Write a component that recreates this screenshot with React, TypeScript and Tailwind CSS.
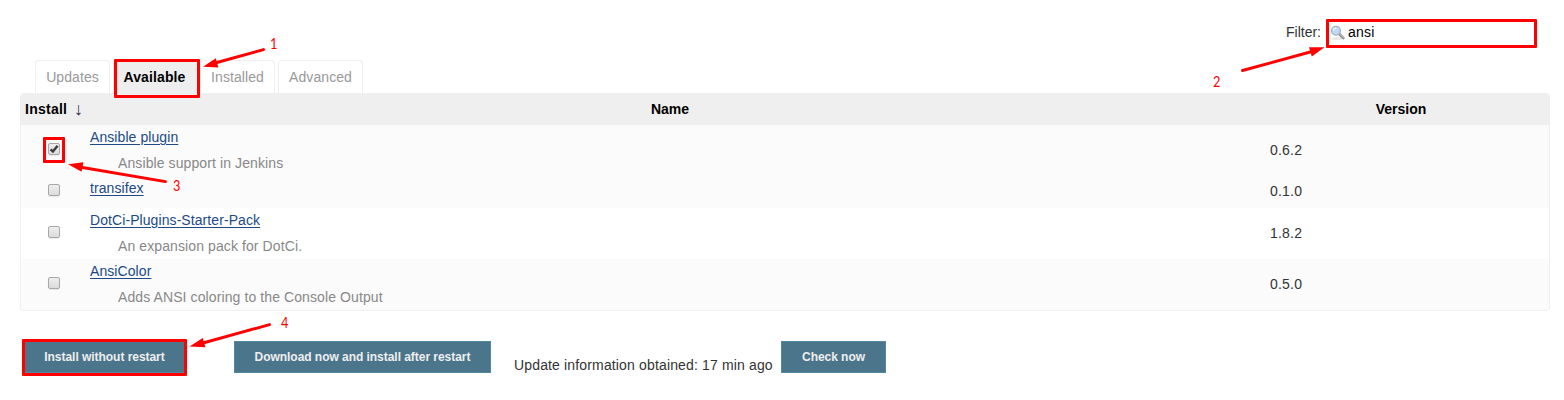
import React from "react";

type Plugin = { name: string; description?: string; version: string; checked?: boolean; height: string; box: string; bg: string };

const plugins: Plugin[] = [
  { name: "Ansible plugin", description: "Ansible support in Jenkins", version: "0.6.2", checked: true, height: "h-[51px]", box: "pb-1", bg: "bg-[#fbfbfb]" },
  { name: "transifex", version: "0.1.0", height: "h-8 pb-[2px]", box: "pb-[2px]", bg: "bg-[#fbfbfb]" },
  { name: "DotCi-Plugins-Starter-Pack", description: "An expansion pack for DotCi.", version: "1.8.2", height: "h-[51px]", box: "pb-1", bg: "bg-white" },
  { name: "AnsiColor", description: "Adds ANSI coloring to the Console Output", version: "0.5.0", height: "h-[51px]", box: "pb-1", bg: "bg-[#fbfbfb]" },
];

const tabs = [
  { label: "Updates", width: "w-[75px]" },
  { label: "Available", width: "w-[84px]", active: true },
  { label: "Installed", width: "w-[75px]" },
  { label: "Advanced", width: "w-[85px]" },
];

function Checkbox({ checked }: { checked?: boolean }) {
  return (
    <span role="checkbox" aria-checked={!!checked} className="block size-3 rounded-[2px] border border-[#a8a8a8] bg-linear-to-b from-[#eeeeee] to-[#dcdcdc] shadow-[0_1px_1px_rgba(0,0,0,0.08)]">
      {checked && (
        <svg viewBox="0 0 10 10" className="block size-[10px]">
          <path d="M1.6 5.4 3.9 7.6 8.6 1.8" fill="none" stroke="#3c3c3c" strokeWidth="2.4" />
        </svg>
      )}
    </span>
  );
}

function SearchIcon() {
  return (
    <svg viewBox="0 0 16 16" className="-mt-[2px] size-4 shrink-0">
      <ellipse cx="7" cy="13.6" rx="6" ry="1.5" fill="#e9e9e9" />
      <path d="M9.4 9.2 13.3 13" stroke="#929292" strokeWidth="2.8" strokeLinecap="round" />
      <path d="M10 9.2 13.4 12.5" stroke="#c9c9c9" strokeWidth="1" strokeLinecap="round" />
      <circle cx="6" cy="5.8" r="4.4" fill="#bfd9f3" stroke="#a3aebd" strokeWidth="1.3" />
      <path d="M3.3 5.6a2.8 2.8 0 0 1 3-2.6" fill="none" stroke="#edf6ff" strokeWidth="1.3" />
    </svg>
  );
}

function Button({ children, className }: { children: React.ReactNode; className: string }) {
  return (
    <button className={`h-8 shrink-0 border border-[#5488a0] bg-[#4b758b] text-[12px] leading-[30px] font-bold tracking-[-0.04px] whitespace-nowrap text-[#eeeeee] ${className}`}>
      {children}
    </button>
  );
}

function Annotations() {
  return (
    <div className="pointer-events-none absolute inset-0 font-['Lato',sans-serif] text-[15px] leading-[14px] text-[#ff0000]">
      <div className="absolute top-[59px] left-[114px] h-[39px] w-[86px] rounded-[1px] border-3 border-[#ff0000]" />
      <div className="absolute top-[19px] left-[1326px] h-[29px] w-[211px] rounded-[1px] border-3 border-[#ff0000]" />
      <div className="absolute top-[137px] left-[43px] h-[26px] w-[22px] rounded-[1px] border-3 border-[#ff0000]" />
      <div className="absolute top-[339px] left-[22px] h-[37px] w-[165px] rounded-[1px] border-3 border-[#ff0000]" />
      <svg viewBox="0 0 1564 400" className="absolute inset-0 h-[400px] w-[1564px]">
        <g stroke="#ff0000" strokeWidth="2.9" strokeLinecap="round">
          <path d="M263.5 49.6 215 63" />
          <path d="M1242.5 70.5 1312 51.5" />
          <path d="M165.5 181.6 81 167.2" />
          <path d="M269.5 324.6 203 343" />
        </g>
        <g fill="#ff0000">
          <path d="M203 66.7 215.8 58.3 218.4 67.4Z" />
          <path d="M1324.5 47.2 1309 47.2 1311.8 56.4Z" />
          <path d="M68 164.3 83.4 162.2 81.6 171.8Z" />
          <path d="M189.5 346.4 202.7 338 205.4 347.2Z" />
        </g>
      </svg>
      <span className="absolute top-[36px] left-[270px] origin-left scale-x-85">1</span>
      <span className="absolute top-[74px] left-[1213px] origin-left scale-x-85">2</span>
      <span className="absolute top-[178px] left-[173px] origin-left scale-x-85">3</span>
      <span className="absolute top-[315px] left-[281px] origin-left scale-x-85">4</span>
    </div>
  );
}

export default function App() {
  return (
    <main className="relative h-[400px] w-[1564px] overflow-hidden bg-white pl-5 font-['Liberation_Sans',Arial,sans-serif] text-[14px] text-[#333333]">
      <div className="flex h-[60px] items-start pt-[19px] pl-[1266px]">
        <label className="w-10 leading-[27px]">Filter:</label>
        <div className="flex h-[29px] w-[211px] items-center pl-1 text-black">
          <SearchIcon />
          <span className="ml-[2px] pb-1 leading-[22px] tracking-[0.2px]">ansi</span>
        </div>
      </div>

      <nav className="flex h-[33px] gap-[3px] pl-[15px]">
        {tabs.map((tab) => (
          <a key={tab.label} className={`h-full rounded-t-[4px] border border-b-0 border-[#efefef] text-center leading-[32px] ${tab.width} ${tab.active ? "bg-[#eeeeee] pr-px font-bold tracking-[0.12px] text-black" : "bg-white tracking-[0.08px] text-[#999999]"}`}>
            {tab.label}
          </a>
        ))}
      </nav>

      <section className="w-[1530px] overflow-hidden rounded-[4px] border border-t-0 border-[#efefef]">
        <header className="flex h-8 bg-[#efefef] leading-[32px] font-bold text-black">
          <div className="w-[65px] pl-1 whitespace-nowrap">
            <span className="tracking-[0.25px]">Install</span>{" "}
            <span className="ml-[3px] inline-block translate-y-px text-[18px] leading-[20px] font-normal text-[#333355]">↓</span>
          </div>
          <div className="w-[1168px] text-center">Name</div>
          <div className="flex-1 pr-px text-center">Version</div>
        </header>
        {plugins.map((p) => (
          <div key={p.name} className={`flex items-center ${p.height} ${p.bg}`}>
            <div className={`flex w-[69px] justify-start pl-[27px] ${p.box}`}>
              <Checkbox checked={p.checked} />
            </div>
            <div className="w-[1180px] self-start pt-[4px] leading-4">
              <a className="block h-[26px] tracking-[0.08px] text-[#204a87] underline underline-offset-2">{p.name}</a>
              {p.description && <p className="pl-7 tracking-[0.1px] text-[#888888]">{p.description}</p>}
            </div>
            <div className="tracking-[0.2px]">{p.version}</div>
          </div>
        ))}
      </section>

      <footer className="flex items-start pt-[30px] pl-[4px]">
        <Button className="w-[161px]">Install without restart</Button>
        <Button className="ml-[49px] w-[257px]">Download now and install after restart</Button>
        <span className="mt-[16px] ml-[23px] w-[267px] leading-4 tracking-[0.15px] whitespace-nowrap">Update information obtained: 17 min ago</span>
        <Button className="w-[105px]">Check now</Button>
      </footer>
      <Annotations />
    </main>
  );
}
